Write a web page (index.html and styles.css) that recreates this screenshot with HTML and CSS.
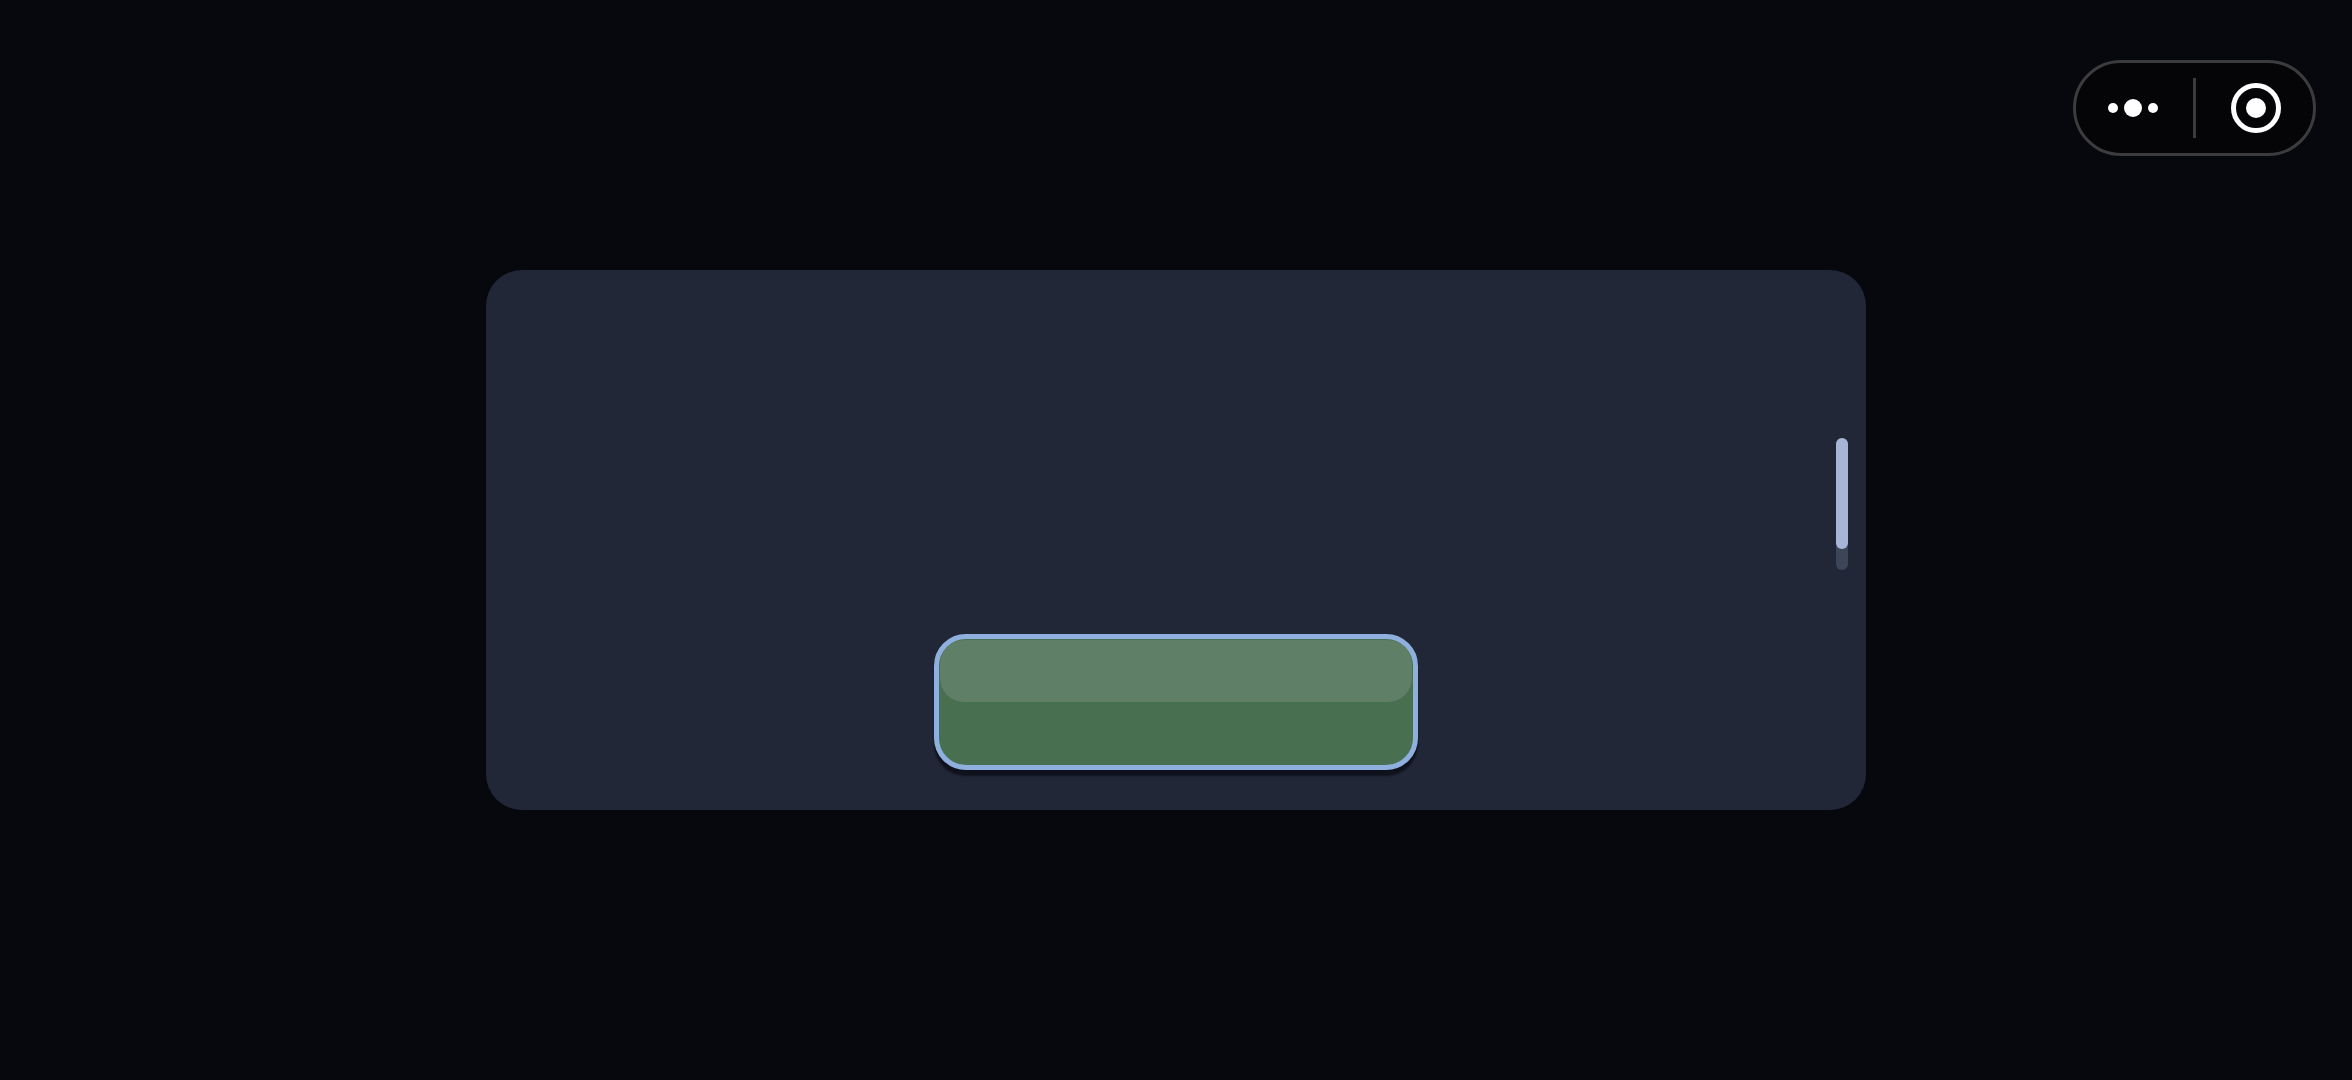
FILE: index.html
```html
<!DOCTYPE html>
<html lang="en">
<head>
<meta charset="utf-8">
<title>Mini program</title>
<link rel="stylesheet" href="styles.css">
</head>
<body>
<main class="stage">
  <section class="card">
    <div class="scrollbar"><div class="scrollbar-thumb"></div></div>
    <div class="game-button" role="button" aria-label="Action"><div class="game-button-shine"></div></div>
  </section>
</main>
<div class="capsule">
  <div class="capsule-part capsule-more">
    <span class="dot"></span><span class="dot dot-big"></span><span class="dot"></span>
  </div>
  <div class="capsule-divider"></div>
  <div class="capsule-part capsule-close"><span class="target"><span class="target-core"></span></span></div>
</div>
</body>
</html>
```
FILE: styles.css
```css
* { box-sizing: border-box; }
html, body { margin: 0; height: 100%; }
body { background: #06080d; overflow: hidden; font-family: "Liberation Sans", sans-serif; }
.stage { height: 100vh; display: grid; place-items: center; }
.card {
  position: relative;
  width: 1380px;
  height: 540px;
  border-radius: 36px;
  background: #222738;
  display: flex;
  flex-direction: column;
  justify-content: flex-end;
  align-items: center;
  padding-bottom: 40px;
}
.scrollbar {
  position: absolute;
  top: 168px;
  right: 18px;
  width: 12px;
  height: 132px;
  border-radius: 6px;
  background: #3d4559;
}
.scrollbar-thumb { height: 111px; border-radius: 6px; background: #a7b6d6; }
.game-button {
  width: 484px;
  height: 136px;
  padding: 0;
  border: 5px solid #8fb0de;
  border-radius: 32px;
  background: #486f50;
  box-shadow: 0 6px 2px rgba(10, 12, 20, .75);
}
.game-button-shine {
  height: 62px;
  margin: 1px 1px 0;
  border-radius: 24px;
  background: #5f7f67;
}
.capsule {
  position: absolute;
  top: 60px;
  right: 36px;
  width: 243px;
  height: 96px;
  display: flex;
  align-items: center;
  border: 3px solid #3c3c3e;
  border-radius: 48px;
  background: #050508;
}
.capsule-part { flex: 1; display: flex; align-items: center; justify-content: center; }
.capsule-more { gap: 6px; padding-right: 3px; }
.capsule-close { padding-left: 3px; }
.dot { width: 10px; height: 10px; border-radius: 50%; background: #fff; }
.dot-big { width: 18px; height: 18px; }
.capsule-divider { width: 3px; height: 60px; background: #3c3c3e; }
.target {
  width: 50px;
  height: 50px;
  border: 5px solid #fff;
  border-radius: 50%;
  display: flex;
  align-items: center;
  justify-content: center;
}
.target-core { width: 20px; height: 20px; border-radius: 50%; background: #fff; }
```
